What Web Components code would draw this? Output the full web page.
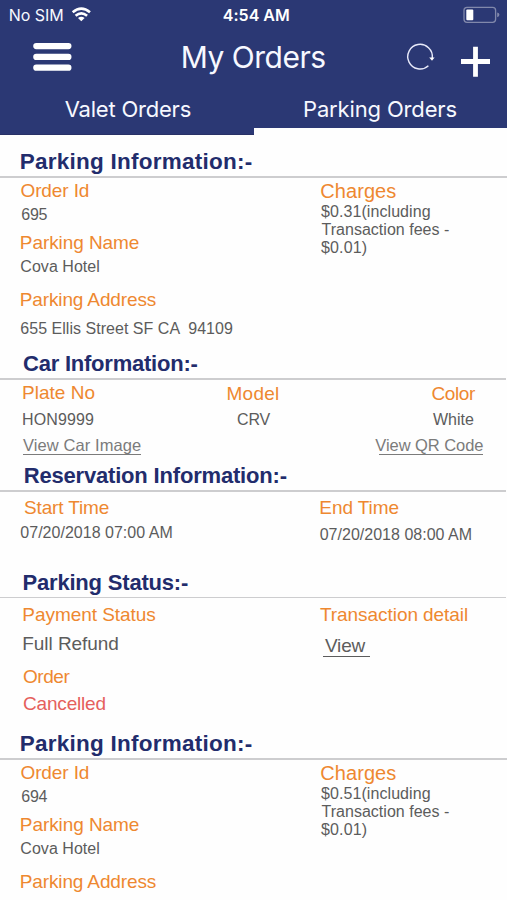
<!DOCTYPE html>
<html lang="en">
<head>
<meta charset="utf-8">
<title>My Orders</title>
<style>
html,body{margin:0;height:900px;overflow:hidden;background:#fefefe}
body{font-family:"Liberation Sans",Arial,sans-serif}
</style>
</head>
<body>
<orders-app></orders-app>

<template id="app">
<style>
:host{display:flex;flex-direction:column;width:507px;height:900px;overflow:hidden;background:#fefefe}
</style>
<app-header></app-header>
<order-parking number="695" charge="$0.31(including" address="655 Ellis Street SF CA  94109"></order-parking>

<info-section style="--h:112px;--cols:200px 150px 1fr;--rule:1.5px;--end:1.5px">
  <text-line slot="title" kind="title" x="23" w="174.5" size="22" step="30">Car Information:-</text-line>
  <info-column>
    <text-line kind="label" x="23" w="71.5" size="19" step="20">Plate No</text-line>
    <text-line x="23" w="71" size="16" step="26">HON9999</text-line>
    <text-line kind="link" x="23" w="118" size="16.5" step="25" line="117.5">View Car Image</text-line>
  </info-column>
  <info-column>
    <text-line kind="label" x="27.5" w="50.5" size="19" step="21">Model</text-line>
    <text-line x="37" w="33.5" size="16" step="25">CRV</text-line>
  </info-column>
  <info-column>
    <text-line kind="label" x="81.5" w="44.5" size="19" step="21">Color</text-line>
    <text-line x="83" w="41" size="16" step="25">White</text-line>
    <text-line kind="link" x="25.3" w="108" size="16.5" step="25" line="104" shift="4">View QR Code</text-line>
  </info-column>
</info-section>

<info-section style="--h:108px;--cols:300px 1fr;--rule:1.5px;--end:1.5px">
  <text-line slot="title" kind="title" x="24.7" w="262" size="22" step="30">Reservation Information:-</text-line>
  <info-column>
    <text-line kind="label" x="24" w="85" size="19" step="23">Start Time</text-line>
    <text-line x="20.3" w="153" size="16" step="24.5">07/20/2018 07:00 AM</text-line>
  </info-column>
  <info-column>
    <text-line kind="label" x="20.3" w="78.5" size="19" step="23">End Time</text-line>
    <text-line x="19.7" w="153" size="16" step="26">07/20/2018 08:00 AM</text-line>
  </info-column>
</info-section>

<info-section style="--h:155px;--cols:300px 1fr;--rule:1.5px;--end:1.5px">
  <text-line slot="title" kind="title" x="23.5" w="164.5" size="22" step="28.5">Parking Status:-</text-line>
  <info-column>
    <text-line kind="label" x="23.3" w="132" size="19" step="23.2">Payment Status</text-line>
    <text-line x="23.3" w="95" size="19" step="29">Full Refund</text-line>
    <text-line kind="label" x="23" w="47.5" size="19" step="33">Order</text-line>
    <text-line kind="alert" x="23" w="82.5" size="19" step="27">Cancelled</text-line>
  </info-column>
  <info-column>
    <text-line kind="label" x="20" w="147" size="19" step="23.2">Transaction detail</text-line>
    <text-line kind="view" x="25" w="40.5" size="19" step="31" line="47" shift="-2">View</text-line>
  </info-column>
</info-section>

<order-parking number="694" charge="$0.51(including" address=""></order-parking>
</template>

<template id="header">
<style>
:host{display:block;height:135px;flex:none;background:#2b3874;color:#fff;font-family:Inter,sans-serif}
.status{display:grid;grid-template-columns:70px 150px 1fr auto;height:30px}
.bar{display:grid;grid-template-columns:180px 1fr auto auto;height:64px}
.tabs{display:grid;grid-template-columns:254px 253px;height:41px}
.tab{box-sizing:border-box;border-bottom:1px solid #283166}
.tab.on{border-bottom:7px solid #fefefe}
svg{display:block}
</style>
<div class="status">
  <text-line kind="light" x="9.7" w="53.5" size="16" step="21">No SIM</text-line>
  <svg width="24" height="30" viewBox="70 0 24 30" fill="none" stroke="#fff" stroke-width="2.6"><path d="M72.7 12.3Q81.3 5 90 12.3M75.6 15.8Q81.3 10.9 87.1 15.8"/><path d="M78 18Q81.3 15.5 84.6 18L81.3 21.3z" fill="#fff" stroke="none"/></svg>
  <text-line kind="clock" x="2.8" w="66.2" size="16" step="21">4:54 AM</text-line>
  <svg width="47" height="30" viewBox="460 0 47 30"><rect x="464" y="7.3" width="31.6" height="15" rx="3" fill="none" stroke="#8188ab" stroke-width="1.3"/><rect x="466.3" y="9.5" width="7" height="10.8" rx="1" fill="#fff"/><path d="M497.2 12.4q2.2.4 2.2 2.4t-2.2 2.4z" fill="#8188ab"/></svg>
</div>
<div class="bar">
  <svg width="90" height="64" viewBox="0 30 90 64" fill="#fff"><rect x="33.2" y="43" width="38.3" height="6.2" rx="3.1"/><rect x="33.2" y="53.8" width="38.3" height="6.2" rx="3.1"/><rect x="33.2" y="64.6" width="38.3" height="6.2" rx="3.1"/></svg>
  <text-line kind="light" x="2.7" w="142.5" size="30" step="38">My Orders</text-line>
  <svg width="47" height="64" viewBox="400 30 47 64" fill="none" stroke="#e8eafa"><path stroke-width="1.4" d="M428.4 65.7A12.3 12.3 0 1 1 432.3 58"/><path d="M429.2 57.6h5.4l-2.6 3.2z" fill="#fff" stroke="none"/></svg>
  <svg width="60" height="64" viewBox="447 30 60 64" stroke="#fff" stroke-width="4.8"><path d="M461 61.5h29M475.5 46.7v30"/></svg>
</div>
<div class="tabs">
  <div class="tab"><text-line kind="light" x="64.7" w="126" size="22" step="23">Valet Orders</text-line></div>
  <div class="tab on"><text-line kind="light" x="50" w="152.5" size="22" step="23">Parking Orders</text-line></div>
</div>
</template>

<template id="section">
<style>
:host{display:block;flex:none;height:var(--h)}
.rule{height:var(--rule);background:#cdcdcf;margin:var(--lead,6px) var(--end,0) 0 0}
.body{display:grid;grid-template-columns:var(--cols)}
</style>
<slot name="title"></slot>
<div class="rule"></div>
<div class="body"><slot></slot></div>
</template>

<script>
const clone = id => document.getElementById(id).content.cloneNode(true);
const fromTemplate = id => class extends HTMLElement {
  constructor() {
    super();
    this.attachShadow({ mode: "open" }).append(clone(id));
  }
};

// One line of text: `step` is the distance down to its baseline,
// `x` the left edge of its ink and `w` the width of its ink.
const pen = document.createElement("canvas").getContext("2d");
class TextLine extends HTMLElement {
  connectedCallback() {
    if (this.shadowRoot) return;
    const n = a => parseFloat(this.getAttribute(a)) || 0;
    const kind = this.getAttribute("kind");
    const size = n("size"), x = n("x"), line = n("line");
    const inter = kind === "light" || kind === "clock";
    const weight = kind === "title" ? 700 : kind === "clock" ? 600 : 400;
    const text = this.textContent;
    pen.font = `${weight} ${size}px ${inter ? "Inter" : '"Liberation Sans"'}`;
    const m = pen.measureText(text);
    const ink = m.actualBoundingBoxRight + m.actualBoundingBoxLeft;
    const spacing = (n("w") - ink) / (text.length - 1);
    const drop = inter ? 0.3636 : 0.3465;
    const color = { title: "#222c6c", label: "#ee8830", link: "#7b7b7b", alert: "#e5605c", light: "#f7f8ff", clock: "#fff" }[kind] || "#5c5c5c";
    this.attachShadow({ mode: "open" }).innerHTML = `<style>
      :host{display:block;box-sizing:border-box;height:${n("step")}px;padding:${n("step") - drop * size}px 0 0 ${x + m.actualBoundingBoxLeft}px;
        line-height:0;white-space:pre;color:${color};font-size:${size}px;font-weight:${weight};letter-spacing:${spacing}px}
      .line{width:${line}px;height:1.5px;background:currentColor;margin:${drop * size + 3.5}px 0 0 ${n("shift")}px}
    </style><slot></slot>${line ? '<div class="line"></div>' : ""}`;
  }
}

class InfoColumn extends HTMLElement {
  constructor() {
    super();
    this.attachShadow({ mode: "open" }).innerHTML =
      "<style>:host{display:flex;flex-direction:column;min-width:0}</style><slot></slot>";
  }
}

class OrderParking extends HTMLElement {
  connectedCallback() {
    if (this.shadowRoot) return;
    const a = k => this.getAttribute(k);
    this.attachShadow({ mode: "open" }).innerHTML = `<style>:host{display:block;flex:none}</style>
    <info-section style="--h:207px;--cols:300px 1fr;--rule:2px;--lead:6.4px">
      <text-line slot="title" kind="title" x="20.7" w="231" size="22.5" step="34.6">Parking Information:-</text-line>
      <info-column>
        <text-line kind="label" x="20.5" w="68.3" size="19" step="20">Order Id</text-line>
        <text-line x="21.3" w="26.3" size="16" step="23">${a("number")}</text-line>
        <text-line kind="label" x="20.8" w="118" size="19" step="29">Parking Name</text-line>
        <text-line x="20.3" w="79" size="16" step="22.4">Cova Hotel</text-line>
        <text-line kind="label" x="20.8" w="136" size="19" step="34.6">Parking Address</text-line>
        ${a("address") ? `<text-line x="20.3" w="213.5" size="16" step="27.2">${a("address")}</text-line>` : ""}
      </info-column>
      <info-column>
        <text-line kind="label" x="21.3" w="75" size="20" step="20">Charges</text-line>
        <text-line x="21" w="108.7" size="16" step="20">${a("charge")}</text-line>
        <text-line x="21.5" w="127.5" size="16" step="18">Transaction fees -</text-line>
        <text-line x="21" w="45.7" size="16" step="17.5">$0.01)</text-line>
      </info-column>
    </info-section>`;
  }
}

customElements.define("text-line", TextLine);
customElements.define("info-column", InfoColumn);
customElements.define("info-section", fromTemplate("section"));
customElements.define("app-header", fromTemplate("header"));
customElements.define("order-parking", OrderParking);
customElements.define("orders-app", fromTemplate("app"));
</script>
</body>
</html>
